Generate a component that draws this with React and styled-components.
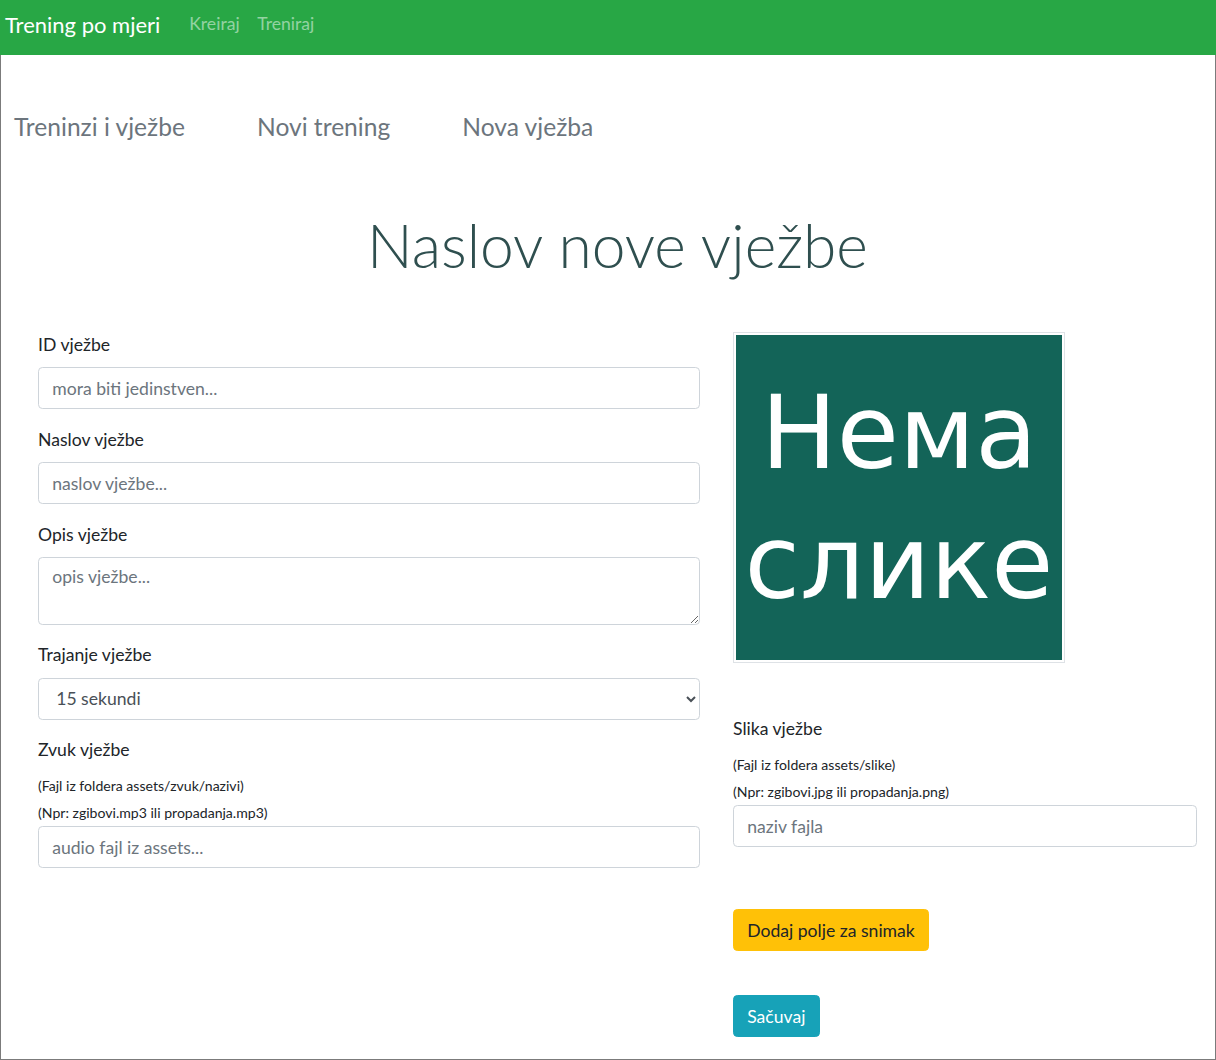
import styled, { createGlobalStyle } from "styled-components";

const FONT = `"Segoe UI", Lato, "Open Sans", sans-serif`;

const GlobalStyle = createGlobalStyle`
  *, *::before, *::after { box-sizing: border-box; }
  html, body { margin: 0; padding: 0; background: #fff; }
  body {
    font-family: ${FONT};
    font-size: 17.6px;
    line-height: 1.5;
    color: #212529;
  }
`;

const App = () => {
  return (
    <Page>
      <GlobalStyle />
      <Navbar>
        <Brand>Trening po mjeri</Brand>
        <NavLink>Kreiraj</NavLink>
        <NavLink>Treniraj</NavLink>
      </Navbar>
      <Frame>
        <Tabs>
          <Tab>Treninzi i vježbe</Tab>
          <Tab>Novi trening</Tab>
          <Tab>Nova vježba</Tab>
        </Tabs>
        <Content>
          <Title>Naslov nove vježbe</Title>
          <FormGrid>
            <div>
              <Group>
                <Label>ID vježbe</Label>
                <Input placeholder="mora biti jedinstven..." />
              </Group>
              <Group>
                <Label>Naslov vježbe</Label>
                <Input placeholder="naslov vježbe..." />
              </Group>
              <Group>
                <Label>Opis vježbe</Label>
                <TextArea rows={2} placeholder="opis vježbe..." />
              </Group>
              <Group>
                <Label>Trajanje vježbe</Label>
                <Select defaultValue="15">
                  <option value="15">15 sekundi</option>
                  <option value="30">30 sekundi</option>
                  <option value="45">45 sekundi</option>
                  <option value="60">60 sekundi</option>
                </Select>
              </Group>
              <Group>
                <Label>Zvuk vježbe</Label>
                <Hints>
                  <Hint>(Fajl iz foldera assets/zvuk/nazivi)</Hint>
                  <Hint>(Npr: zgibovi.mp3 ili propadanja.mp3)</Hint>
                </Hints>
                <Input placeholder="audio fajl iz assets..." />
              </Group>
            </div>
            <div>
              <Thumb>
                <NoImage>
                  <span>Нема</span>
                  <span>слике</span>
                </NoImage>
              </Thumb>
              <Group $top={53}>
                <Label>Slika vježbe</Label>
                <Hints>
                  <Hint>(Fajl iz foldera assets/slike)</Hint>
                  <Hint>(Npr: zgibovi.jpg ili propadanja.png)</Hint>
                </Hints>
                <Input placeholder="naziv fajla" />
              </Group>
              <Button $variant="warning" $top={62}>
                Dodaj polje za snimak
              </Button>
              <Button $variant="info" $top={44}>
                Sačuvaj
              </Button>
            </div>
          </FormGrid>
        </Content>
      </Frame>
    </Page>
  );
};

const Page = styled.div`
  width: 1216px;
  height: 1060px;
  display: flex;
  flex-direction: column;
`;

const Navbar = styled.nav`
  height: 55px;
  flex-shrink: 0;
  display: flex;
  align-items: center;
  padding: 0 0 7px 5px;
  background: #28a745;
`;

const Brand = styled.a`
  color: #fff;
  font-size: 22px;
  margin-right: 20px;
`;

const NavLink = styled.a`
  color: rgba(255, 255, 255, 0.5);
  padding: 0 8.8px;
`;

const Frame = styled.div`
  flex: 1;
  border: 1px solid #7b7b7b;
  border-top: none;
`;

const Tabs = styled.div`
  display: flex;
  gap: 72px;
  margin-top: 52px;
  padding-left: 13px;
`;

const Tab = styled.a`
  font-size: 24.6px;
  line-height: 40px;
  color: #6c757d;
`;

const Content = styled.div`
  width: 1159px;
  margin-left: 37px;
`;

const Title = styled.h1`
  margin: 61px 0 0;
  text-align: center;
  font-size: 60.5px;
  font-weight: 300;
  line-height: 74px;
  color: #2f4f4f;
`;

const FormGrid = styled.div`
  display: grid;
  grid-template-columns: 662px 464px;
  column-gap: 33px;
  align-items: start;
  margin-top: 50px;
`;

const Group = styled.div`
  margin-top: ${(p) => p.$top || 0}px;
  margin-bottom: 17.6px;
`;

const Label = styled.label`
  display: block;
  margin-bottom: 8.8px;
  line-height: 26.4px;
`;

const Hints = styled.div`
  margin-top: 2px;
`;

const Hint = styled.div`
  font-size: 14.08px;
  line-height: 27px;
`;

const controlBase = `
  display: block;
  width: 100%;
  border: 1px solid #ced4da;
  border-radius: 4.4px;
  background: #fff;
  font-family: ${FONT};
  font-size: 17.6px;
  color: #495057;
  outline: none;
  &::placeholder { color: #6c757d; opacity: 1; }
`;

const Input = styled.input`
  ${controlBase}
  height: 42px;
  padding: 0 13.2px;
`;

const TextArea = styled.textarea`
  ${controlBase}
  height: 68px;
  padding: 6.6px 13.2px;
  line-height: 1.5;
  resize: vertical;
`;

const Select = styled.select`
  ${controlBase}
  height: 42px;
  padding: 0 8px 0 13.2px;
`;

const Thumb = styled.div`
  width: 332px;
  height: 331px;
  padding: 2px;
  border: 1px solid #dee2e6;
  background: #fff;
`;

const NoImage = styled.div`
  width: 100%;
  height: 100%;
  display: flex;
  flex-direction: column;
  align-items: center;
  justify-content: center;
  background: #136458;
  color: #fff;
  font-family: "DejaVu Sans", Verdana, sans-serif;
  font-size: 101px;
  line-height: 130px;
`;

const Button = styled.button`
  display: block;
  height: 42px;
  margin-top: ${(p) => p.$top || 0}px;
  padding: 0 13.2px;
  border-radius: 4.4px;
  font-family: ${FONT};
  font-size: 17.6px;
  cursor: pointer;
  border: 1px solid ${(p) => (p.$variant === "warning" ? "#ffc107" : "#17a2b8")};
  background: ${(p) => (p.$variant === "warning" ? "#ffc107" : "#17a2b8")};
  color: ${(p) => (p.$variant === "warning" ? "#212529" : "#fff")};
`;

export default App;
